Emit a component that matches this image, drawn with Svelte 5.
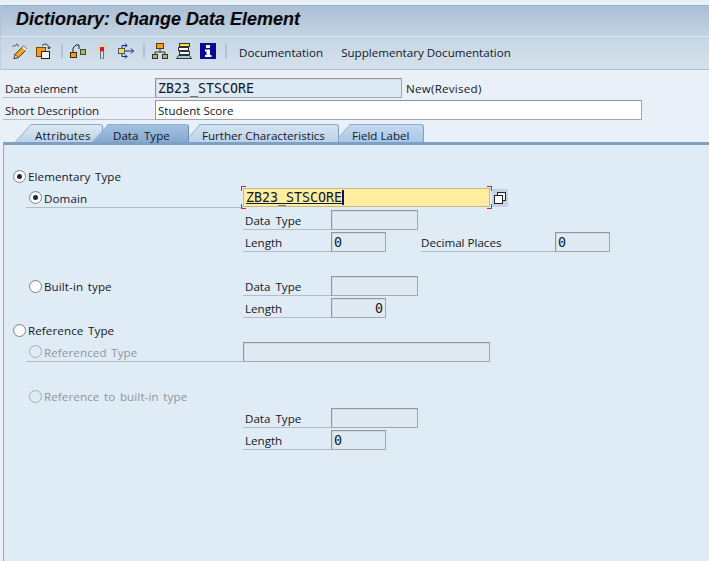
<script>
  const tabs = [
    { label: "Attributes", width: 72, cls: "t1" },
    { label: "Data Type", width: 81, cls: "t2 active" },
    { label: "Further Characteristics", width: 139, cls: "t3" },
    { label: "Field Label", width: 74, cls: "t4" }
  ];
</script>

{#snippet radio(state)}
  <span class="radio {state}"></span>
{/snippet}

{#snippet lengthRow(value, right)}
  <div class="row">
    <div class="spacer"></div>
    <div class="lbl">Length</div>
    <div class="field short" class:right>{value}</div>
  </div>
{/snippet}

{#snippet typeRow()}
  <div class="row">
    <div class="spacer"></div>
    <div class="lbl">Data Type</div>
    <div class="field mid"></div>
  </div>
{/snippet}

<div class="page">
  <div class="titlebar"><h1>Dictionary: Change Data Element</h1></div>

  <div class="toolbar">
    <svg class="ico" viewBox="0 0 16 16">
      <path d="M.5 3.500C1 1.500 2.500 3.500 3.500 3c1-.5 0-2 1.500-2 .8 0 .5 2 2 2" fill="none" stroke="#555" stroke-width="1"/>
      <path d="M3 11.500 11.500 3l3.500 3-8.500 8.500-4.500 1z" fill="#f7a823" stroke="#3a2a18" stroke-width="1"/>
      <path d="M11 4l3.500 3" stroke="#fff" stroke-width="2"/>
      <path d="M3 11.500l-1 4 4.500-1z" fill="#f7e3c0" stroke="#3a2a18" stroke-width=".7"/>
    </svg>
    <svg class="ico" viewBox="0 0 16 16">
      <rect x=".5" y="4.500" width="9" height="9" fill="#f59c1a" stroke="#7a4a00"/>
      <rect x="5.500" y="8.500" width="8" height="7" fill="#f4f7fa" stroke="#222"/>
      <path d="M6 2.500c3-2.500 6-1.500 7 2" fill="none" stroke="#333"/>
      <path d="M11 4.500l2 2 2-2.500z" fill="#333"/>
    </svg>
    <span class="sep"></span>
    <svg class="ico" viewBox="0 0 16 16">
      <rect x=".5" y="9.500" width="6" height="5" fill="#f59c1a" stroke="#3a2a00"/>
      <rect x="10.500" y="6.500" width="5" height="5" fill="#a8bc5a" stroke="#444"/>
      <path d="M3 9V5l3-3h3v4" fill="none" stroke="#222"/>
    </svg>
    <svg class="ico" viewBox="0 0 16 16">
      <path d="M3 2l3 3M13 2l-3 3M8 0v3M2 7h3M11 7h3" stroke="#f2dc30" stroke-width="1"/>
      <rect x="6.500" y="8" width="3" height="8" fill="#d4dbe2" stroke="#6a7480" stroke-width="1"/>
      <rect x="6" y="4" width="4" height="4" fill="#e8102a"/>
    </svg>
    <svg class="ico" viewBox="0 0 16 16">
      <rect x=".5" y="5.500" width="6" height="5" fill="#f5e050" stroke="#555"/>
      <path d="M7 8h8.500M13 5.500 15.500 8 13 10.500M4 5V2.500h5M7 .5 9 2.500 7 4.500M4 11v2.500h5M7 11.500l2 2-2 2" fill="none" stroke="#1a2a80"/>
    </svg>
    <span class="sep"></span>
    <svg class="ico" viewBox="0 0 16 16">
      <rect x="4.500" y=".5" width="7" height="5" fill="#f59c1a" stroke="#5a3a00"/>
      <path d="M8 6v3M3 12V9h10v3" fill="none" stroke="#333"/>
      <rect x=".5" y="11.500" width="5" height="4" fill="#a8bc5a" stroke="#333"/>
      <rect x="10.500" y="11.500" width="5" height="4" fill="#a8bc5a" stroke="#333"/>
    </svg>
    <svg class="ico" viewBox="0 0 16 16">
      <rect x="3.500" y=".5" width="10" height="3" fill="#f5e050" stroke="#333"/>
      <rect x="2.500" y="4.500" width="10" height="3" fill="#f4f7fa" stroke="#333"/>
      <rect x="3.500" y="8.500" width="10" height="3" fill="#f4f7fa" stroke="#333"/>
      <path d="M2.500 12.500h11l2 3H.5z" fill="#9fd3d3" stroke="#333"/>
    </svg>
    <svg class="ico" viewBox="0 0 16 16">
      <rect width="16" height="16" fill="#0a0a90"/>
      <rect x="6" y="2" width="4" height="3" fill="#fff"/>
      <path d="M5 6.500h5V12h1.500v2h-6.500v-2h1.500V8.500H5z" fill="#fff"/>
    </svg>
    <span class="sep"></span>
    <span class="tbtn">Documentation</span>
    <span class="tbtn">Supplementary Documentation</span>
  </div>

  <div class="header">
    <div class="hrow">
      <div class="hlabel">Data element</div>
      <div class="field name">ZB23_STSCORE</div>
      <div class="status">New(Revised)</div>
    </div>
    <div class="hrow">
      <div class="hlabel">Short Description</div>
      <div class="field desc">Student Score</div>
    </div>
  </div>

  <div class="tabstrip">
    {#each tabs as tab}
      <div class="tab {tab.cls}" style="width:{tab.width}px">{tab.label}</div>
    {/each}
  </div>

  <div class="panel">
    <div class="row top">
      {@render radio("on")}
      <span class="rtext">Elementary Type</span>
    </div>
    <div class="row">
      <div class="sub">{@render radio("on")}<span class="rtext">Domain</span></div>
      <div class="focus">
        <span class="corner tl"></span>
        <span class="corner tr"></span>
        <span class="corner bl"></span>
        <span class="corner br"></span>
        <div class="current"><span class="typed">ZB23_STSCORE</span><span class="caret"></span></div>
      </div>
      <div class="help">
        <svg width="12" height="12" viewBox="0 0 12 12">
          <rect x="3.500" y=".5" width="8" height="8" fill="#eef3f8" stroke="#222"/>
          <rect x=".5" y="3.500" width="8" height="8" fill="#fff" stroke="#222"/>
        </svg>
      </div>
    </div>
    {@render typeRow()}
    <div class="row">
      <div class="spacer"></div>
      <div class="lbl">Length</div>
      <div class="field short">0</div>
      <div class="lbl dec">Decimal Places</div>
      <div class="field short">0</div>
    </div>
    <div class="row"></div>
    <div class="row">
      <div class="sub plain">{@render radio("off")}<span class="rtext">Built-in type</span></div>
      <div class="lbl">Data Type</div>
      <div class="field mid"></div>
    </div>
    {@render lengthRow("0", true)}
    <div class="row top">
      {@render radio("off")}
      <span class="rtext">Reference Type</span>
    </div>
    <div class="row">
      <div class="sub">{@render radio("dis")}<span class="rtext grey">Referenced Type</span></div>
      <div class="field wide"></div>
    </div>
    <div class="row"></div>
    <div class="row">
      <div class="sub plain">{@render radio("dis")}<span class="rtext grey">Reference to built-in type</span></div>
    </div>
    {@render typeRow()}
    {@render lengthRow("0", false)}
  </div>
</div>

<style>
:global(body) {
  margin: 0;
  background: #e9f0f7;
}

.page {
  width: 709px;
  height: 561px;
  overflow: hidden;
  display: flex;
  flex-direction: column;
  padding-top: 5px;
  box-sizing: border-box;
  background: #e9f0f7;
  font-family: "Open Sans", "Noto Sans", sans-serif;
  font-size: 11.6px;
  color: #14182a;
}

.titlebar {
  height: 31px;
  box-sizing: border-box;
  border-top: 1px solid #a3b2c2;
  border-left: 1px solid #b4c3d2;
  background: linear-gradient(#a9bfd5, #c3d4e4);
  padding-left: 15px;
}

h1 {
  margin: 0;
  font-family: "Liberation Sans", Arial, sans-serif;
  font-size: 18px;
  font-weight: bold;
  font-style: italic;
  line-height: 27px;
  color: #05060f;
  text-shadow: -1px 0 0 rgba(190, 120, 20, 0.3);
}

.toolbar {
  height: 34px;
  box-sizing: border-box;
  display: flex;
  align-items: center;
  padding: 0 0 4px 12px;
  border-top: 1px solid #dbe5ee;
  border-bottom: 1px solid #b3c2d1;
  border-left: 1px solid #c0cedb;
  background: linear-gradient(#c6d6e5, #d5e1ec);
}

.ico {
  width: 16px;
  height: 16px;
  margin-right: 8px;
  flex: none;
}

.toolbar .ico:first-child {
  margin-left: -1px;
}

.sep {
  width: 2px;
  height: 14px;
  margin-left: 1px;
  margin-right: 7px;
  background: #aec3d8;
  flex: none;
}

.tbtn {
  padding: 3px 5px 0;
  margin-right: 8px;
  white-space: nowrap;
}

.header {
  padding-top: 6px;
}

.hrow {
  height: 22px;
  display: flex;
}

.hlabel {
  width: 150px;
  margin-left: 3px;
  padding: 2px 0 0 2px;
  height: 19px;
  line-height: 22px;
  border-bottom: 1px solid #b5bcc4;
}

.status {
  margin-left: 4px;
  padding-top: 2px;
  line-height: 22px;
  letter-spacing: 0.25px;
}

.field {
  box-sizing: border-box;
  height: 20px;
  margin-top: 2px;
  padding: 0 2px;
  border: 1px solid #a3a7ab;
  border-top-color: #93979c;
  border-left-color: #93979c;
  box-shadow: inset 1px 1px 0 #cfdae4;
  background: #deeaf4;
  font-family: "DejaVu Sans Mono", monospace;
  font-size: 13.3px;
  line-height: 19px;
  flex: none;
}

.name {
  width: 247px;
}

.desc {
  width: 487px;
  background: #fff;
  box-shadow: none;
  font-family: "Open Sans", "Noto Sans", sans-serif;
  font-size: 11.6px;
}

.tabstrip {
  height: 18px;
  margin-top: 4px;
  padding-left: 31px;
  display: flex;
  position: relative;
  z-index: 1;
}

.tab {
  position: relative;
  height: 18px;
  box-sizing: border-box;
  border-top: 1px solid #8eaccb;
  border-right: 1px solid #7f9fc0;
  border-radius: 0 3px 0 0;
  line-height: 21px;
  padding-left: 4px;
  white-space: nowrap;
  flex: none;
}

.tab::before {
  content: "";
  position: absolute;
  left: -8px;
  top: -1px;
  bottom: 0;
  width: 16px;
  border-top: 1px solid #8eaccb;
  border-left: 1px solid #8eaccb;
  background: inherit;
  transform: skewX(-42deg);
  z-index: -1;
}

.t1 {
  background: linear-gradient(#dce8f2, #bdd2e6);
  letter-spacing: 0.2px;
  z-index: 1;
}

.t2 {
  margin-left: 5px;
  padding-left: 5px;
  word-spacing: 2.5px;
  z-index: 3;
}

.active {
  background: linear-gradient(#a3c1e0, #85a9d2);
  border-right-color: #6c8db3;
}

.t3 {
  margin-left: 11px;
  padding-left: 2px;
  background: linear-gradient(#d3e2f0, #bdd3e8);
  z-index: 2;
}

.t4 {
  margin-left: 11px;
  padding-left: 2px;
  background: linear-gradient(#c3d9ee, #a8c7e6);
  z-index: 1;
}

.panel {
  flex: 1;
  margin-left: 3px;
  padding-top: 19px;
  border-left: 1px solid #97aabf;
  border-top: 3px solid #7f9fc6;
  background: #dfebf5;
}

.row {
  display: flex;
  height: 22px;
  flex: none;
}

.top {
  box-sizing: border-box;
  padding: 2px 0 0 9px;
  align-items: center;
}

.sub {
  width: 217px;
  height: 22px;
  box-sizing: border-box;
  margin-left: 22px;
  padding: 2px 0 0 3px;
  display: flex;
  align-items: center;
  border-bottom: 1px solid #b5bcc4;
  flex: none;
}

.plain {
  border-bottom: 0;
}

.spacer {
  width: 239px;
  flex: none;
}

.lbl {
  width: 88px;
  height: 22px;
  box-sizing: border-box;
  padding: 2px 0 0 2px;
  line-height: 22px;
  word-spacing: 2px;
  border-bottom: 1px solid #b5bcc4;
  flex: none;
}

.dec {
  width: 134px;
  margin-left: 35px;
  padding-left: 0;
  word-spacing: 0;
}

.mid {
  width: 87px;
}

.short {
  width: 55px;
}

.right {
  text-align: right;
}

.wide {
  width: 247px;
}

.rtext {
  margin-left: 2px;
  padding-top: 2px;
  line-height: 20px;
  word-spacing: 1.5px;
  letter-spacing: 0.1px;
}

.grey {
  color: #8e959d;
}

.radio {
  width: 13px;
  height: 13px;
  box-sizing: border-box;
  border-radius: 50%;
  border: 1px solid #82878d;
  background: radial-gradient(circle at 60% 60%, #fff 50%, #d8dde2);
  display: inline-block;
  position: relative;
  flex: none;
}

.on::after {
  content: "";
  position: absolute;
  left: 3px;
  top: 3px;
  width: 5px;
  height: 5px;
  border-radius: 50%;
  background: #23263a;
}

.dis {
  background: none;
  border-color: #a5adb5;
}

.focus {
  position: relative;
  width: 247px;
  height: 19px;
  margin-top: 2px;
  flex: none;
}

.corner {
  position: absolute;
  width: 4px;
  height: 4px;
  border: 0 solid #d8202a;
}

.tl {
  left: -2px;
  top: -2px;
  border-width: 1px 0 0 1px;
}

.tr {
  right: -2px;
  top: -2px;
  border-width: 1px 1px 0 0;
}

.bl {
  left: -2px;
  bottom: -2px;
  border-width: 0 0 1px 1px;
}

.br {
  right: -2px;
  bottom: -2px;
  border-width: 0 1px 1px 0;
}

.current {
  box-sizing: border-box;
  height: 19px;
  padding: 0 2px;
  border: 1px solid #c4bb84;
  background: #ffee9f;
  font-family: "DejaVu Sans Mono", monospace;
  font-size: 13.3px;
  line-height: 18px;
  display: flex;
}

.typed {
  text-decoration: underline;
}

.caret {
  width: 2px;
  height: 15px;
  margin-top: 1px;
  background: #10106a;
}

.help {
  width: 16px;
  height: 18px;
  margin: 3px 0 0 2px;
  flex: none;
  background: #c3d3e3;
  display: flex;
  align-items: center;
  justify-content: center;
}
</style>
